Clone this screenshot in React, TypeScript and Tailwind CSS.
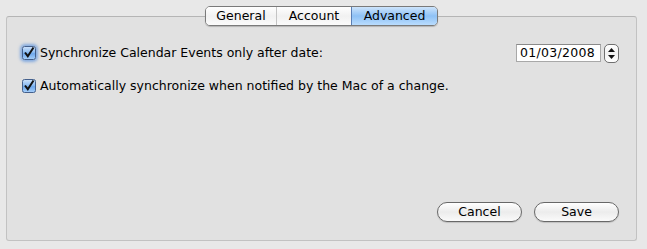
import React from "react";

const font = { fontFamily: '"DejaVu Sans", "Liberation Sans", sans-serif' };

function Check({ focus }: { focus?: boolean }) {
  return (
    <div
      className={
        "w-[14px] h-[14px] shrink-0 rounded-[3px] " +
        (focus ? "shadow-[0_0_3px_2px_rgba(94,148,222,0.7)]" : "")
      }
    >
      <svg width="14" height="14" viewBox="0 0 14 14">
        <defs>
          <linearGradient id={focus ? "cbg1" : "cbg2"} x1="0" y1="0" x2="0" y2="1">
            <stop offset="0" stopColor="#cfe3fb" />
            <stop offset="0.45" stopColor="#8cbcf2" />
            <stop offset="0.55" stopColor="#6ea8ec" />
            <stop offset="1" stopColor="#a8d0fa" />
          </linearGradient>
        </defs>
        <rect x="0.5" y="0.5" width="13" height="13" rx="2" fill={`url(#${focus ? "cbg1" : "cbg2"})`} stroke="#44608c" />
        <path d="M3 6.5 L5.8 10.2 L11.5 1.5" fill="none" stroke="#111" strokeWidth="2" strokeLinejoin="miter" />
      </svg>
    </div>
  );
}

function Stepper() {
  return (
    <div className="w-[15px] h-[19px] ml-[3px] rounded-[5px] border border-[#6f6f6f] bg-gradient-to-b from-[#ffffff] via-[#f0f0f0] to-[#ffffff] flex flex-col items-center justify-center gap-[3px]">
      <svg width="7" height="4" viewBox="0 0 7 4">
        <path d="M3.5 0 L7 4 L0 4 Z" fill="#111" />
      </svg>
      <svg width="7" height="4" viewBox="0 0 7 4">
        <path d="M0 0 L7 0 L3.5 4 Z" fill="#111" />
      </svg>
    </div>
  );
}

function Button({ label }: { label: string }) {
  return (
    <div className="w-[85px] h-[20px] rounded-full border border-[#686868] bg-gradient-to-b from-[#ffffff] via-[#ececec] to-[#fafafa] flex items-center justify-center text-[12.5px] text-black shadow-[0_1px_1px_rgba(0,0,0,0.15)]">
      {label}
    </div>
  );
}

export default function App() {
  return (
    <div className="w-[647px] h-[249px] bg-[#e8e8e8] pt-[6px] pl-[6px] pr-[10px]" style={font}>
      <div className="relative z-10 flex justify-center h-[20px]">
        <div className="flex h-[20px] rounded-[5px] border border-[#7a7a7a] overflow-hidden text-[12.5px] text-black shadow-[0_1px_1px_rgba(0,0,0,0.2)]">
          <div className="w-[71px] flex items-center justify-center bg-gradient-to-b from-[#ffffff] via-[#f1f1f1] to-[#fbfbfb] border-r border-[#c4c4c4]">
            General
          </div>
          <div className="w-[74px] flex items-center justify-center bg-gradient-to-b from-[#ffffff] via-[#f1f1f1] to-[#fbfbfb]">
            Account
          </div>
          <div className="w-[86px] flex items-center justify-center bg-gradient-to-b from-[#cde4fb] via-[#8ec1f5] to-[#b9dcfd] border-l border-[#5a7fb5]">
            Advanced
          </div>
        </div>
      </div>
      <div className="-mt-[10px] h-[225px] rounded-[3px] border border-[#c2c2c2] border-t-[#b5b5b5] bg-[#e1e1e1] flex flex-col pt-[26px] pl-[15px] pr-[17px] pb-[18px] text-[12.5px] text-black">
        <div className="flex items-center h-[20px]">
          <Check focus />
          <span className="ml-[4px]">Synchronize Calendar Events only after date:</span>
          <div className="ml-auto flex items-center">
            <div className="w-[85px] h-[18px] bg-white border border-[#a8a8a8] border-t-[#8a8a8a] flex items-center pl-[3px] text-[12.5px] tracking-[0.3px]">
              01/03/2008
            </div>
            <Stepper />
          </div>
        </div>
        <div className="flex items-center h-[20px] mt-[13px]">
          <Check />
          <span className="ml-[4px]">Automatically synchronize when notified by the Mac of a change.</span>
        </div>
        <div className="mt-auto flex justify-end gap-[12px]">
          <Button label="Cancel" />
          <Button label="Save" />
        </div>
      </div>
    </div>
  );
}
